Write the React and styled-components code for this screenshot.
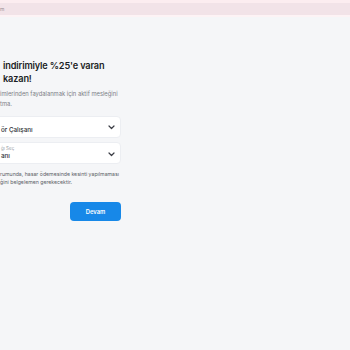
import React from 'react'
import styled, { createGlobalStyle } from 'styled-components'

const Global = createGlobalStyle`
  html, body {
    margin: 0;
    padding: 0;
    background: #f5f6f8;
    font-family: Inter, "Noto Sans", sans-serif;
  }
`

const Banner = styled.div`
  height: 12px;
  border-top: 3px solid #fcedf0;
  border-bottom: 2px solid #fdf3f5;
  background: #f2e3e8;
  display: flex;
  align-items: center;
  font-size: 5px;
  color: #9a8e92;
`

const Page = styled.main`
  display: flex;
  flex-direction: column;
  width: 131px;
  margin-left: -10px;
  padding-top: 42px;
`

const Title = styled.h1`
  margin: 0 0 4px;
  padding-left: 13px;
  font-size: 9.2px;
  line-height: 13px;
  font-weight: 600;
  color: #1c1e25;
  letter-spacing: -0.15px;
  white-space: nowrap;
`

const Lead = styled.p`
  margin: 0 0 8px;
  padding-left: 10px;
  font-size: 5.8px;
  line-height: 9.5px;
  color: #7b7e86;
  white-space: nowrap;
`

const Select = styled.div`
  position: relative;
  height: 20px;
  margin-bottom: 4px;
  background: #fff;
  border: 1px solid #eceef2;
  border-radius: 4px;
  display: flex;
  flex-direction: column;
  justify-content: center;
  padding-left: 10px;
`

const Label = styled.span`
  font-size: 4.5px;
  line-height: 6px;
  color: #9b9ea6;
  white-space: nowrap;
`

const Value = styled.span`
  font-size: 6.3px;
  line-height: 8px;
  font-weight: 500;
  color: #2a2c33;
  white-space: nowrap;
  padding-top: ${p => (p.$low ? 6 : 0)}px;
`

const Chevron = styled.svg`
  position: absolute;
  right: 5px;
  top: ${p => p.$top}px;
`

const Note = styled.p`
  margin: 2px 0 16px;
  padding-left: 10px;
  font-size: 5.2px;
  line-height: 8px;
  color: #5b5e66;
  white-space: nowrap;
`

const Actions = styled.div`
  display: flex;
  justify-content: flex-end;
`

const Button = styled.button`
  width: 51px;
  height: 19px;
  border: none;
  border-radius: 4px;
  background: #1788e8;
  color: #fff;
  font-family: inherit;
  font-size: 5.8px;
  font-weight: 600;
  cursor: pointer;
`

function Arrow({ top }) {
  return (
    <Chevron $top={top} width="7" height="5" viewBox="0 0 7 5">
      <path d="M1 1 L3.5 3.5 L6 1" fill="none" stroke="#3a3c44" strokeWidth="1.2" strokeLinecap="round" strokeLinejoin="round" />
    </Chevron>
  )
}

export default function App() {
  return (
    <>
      <Global />
      <Banner>m</Banner>
      <Page>
        <Title>
          indirimiyle %25'e varan
          <br />
          kazan!
        </Title>
        <Lead>
          imlerinden faydalanmak için aktif mesleğini
          <br />
          tma.
        </Lead>
        <Select>
          <Value $low>ör Çalışanı</Value>
          <Arrow top={8} />
        </Select>
        <Select>
          <Label>ğı Seç</Label>
          <Value>anı</Value>
          <Arrow top={9} />
        </Select>
        <Note>
          rumunda, hasar ödemesinde kesinti yapılmaması
          <br />
          ğini belgelemen gerekecektir.
        </Note>
        <Actions>
          <Button>Devam</Button>
        </Actions>
      </Page>
    </>
  )
}
